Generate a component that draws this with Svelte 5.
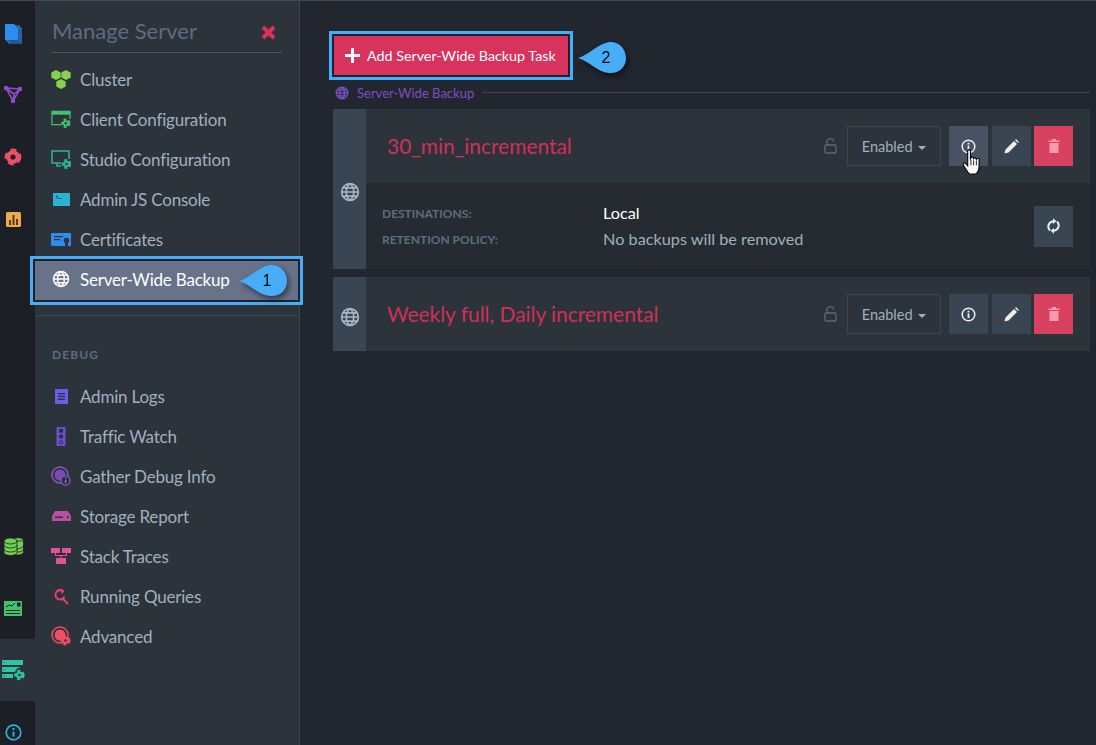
<script>
	const globeLines = 'M12 2a10 10 0 1 0 0 20a10 10 0 1 0 0-20M2 12h20M3.4 7h17.2M3.4 17h17.2M12 2c-6 5-6 15 0 20M12 2c6 5 6 15 0 20';
</script>

{#snippet globe(size, color, width = 2)}
	<svg width={size} height={size} viewBox="0 0 24 24" fill="none" stroke={color} stroke-width={width}><path d={globeLines} /></svg>
{/snippet}

{#snippet gear(cx, cy, r, color, hole)}
	<circle {cx} {cy} r={r} fill={color} />
	<circle {cx} {cy} r={r + 0.6} fill="none" stroke={color} stroke-width="2" stroke-dasharray={`${r * 0.9} ${r * 0.67}`} />
	<circle {cx} {cy} r={r * 0.38} fill={hole} />
{/snippet}

{#snippet callout(n)}
	<svg width="52" height="36" viewBox="0 0 52 36">
		<path d="M1 17C12 14 20 3 32 1C41 0 49 7 49 17C49 27 41 33 32 32C20 31 12 20 1 17Z" fill="#47adf8" />
	</svg>
	<span class="callout-num">{n}</span>
{/snippet}

<div class="page">
	<nav class="rail">
		<div class="rail-item">
			<svg width="18" height="21" viewBox="0 0 18 21">
				<path d="M5 5h12v15H5z" fill="none" stroke="#2f8df0" stroke-width="1.2" />
				<path d="M3 3h12v15H3z" fill="#1c2026" stroke="#2f8df0" stroke-width="1.2" />
				<path d="M1 2a1 1 0 0 1 1-1h8l4 4v11a1 1 0 0 1-1 1H2a1 1 0 0 1-1-1z" fill="#2f8df0" />
			</svg>
		</div>
		<div class="rail-item">
			<svg width="18" height="18" viewBox="0 0 18 18" fill="none" stroke="#8d4fc4" stroke-width="1.6">
				<path d="M2 2L16 3L9 15ZM2 2L10 8M16 3L10 8M9 15L10 8" />
				<circle cx="2" cy="2" r="1.5" fill="#8d4fc4" /><circle cx="16" cy="3" r="1.5" fill="#8d4fc4" /><circle cx="9" cy="15" r="1.5" fill="#8d4fc4" />
			</svg>
		</div>
		<div class="rail-item">
			<svg width="18" height="18" viewBox="0 0 18 18">
				{@render gear(9, 9, 6.8, '#f0506a', '#1c2026')}
			</svg>
		</div>
		<div class="rail-item">
			<svg width="15" height="15" viewBox="0 0 15 15">
				<rect width="15" height="15" rx="1.5" fill="#f0a94e" />
				<path d="M3 8h2v5H3zM6.5 3h2v10h-2zM10 7h2v6h-2z" fill="#5a3b22" />
			</svg>
		</div>
		<div class="rail-bottom">
			<div class="rail-item">
				<svg width="21" height="19" viewBox="0 0 21 19" fill="#73cf4f" stroke="#1c2026" stroke-width=".8">
					<ellipse cx="15" cy="3.5" rx="5.5" ry="2.8" /><path d="M9.5 4h11v11a5.5 3 0 0 1-11 0z" />
					<path d="M9.5 8.5a5.5 3 0 0 0 11 0M9.5 12a5.5 3 0 0 0 11 0" fill="none" />
					<path d="M1 4a6.5 3 0 0 1 13 0v11.5a6.500 3 0 0 1-13 0z" />
					<path d="M1 8a6.500 3 0 0 0 13 0M1 12a6.500 3 0 0 0 13 0M1 4a6.500 3 0 0 0 13 0" fill="none" />
				</svg>
			</div>
			<div class="rail-item">
				<svg width="18" height="15" viewBox="0 0 18 15">
					<rect width="18" height="15" fill="#3ec46d" />
					<path d="M2 6l3-2l3 1l3-3" fill="none" stroke="#1c2026" />
					<path d="M13 1.500h3.500v4H13zM2 9h14v1H2zM2 12h14v1H2z" fill="#1c2026" />
				</svg>
			</div>
			<div class="rail-item active">
				<svg width="24" height="21" viewBox="0 0 24 21">
					<rect x="1" y="0" width="21" height="5" fill="#2ec4a5" />
					<path d="M1 7h19q-5 1-6 5H1zM1 14h11v4H1z" fill="#2ec4a5" />
					<path d="M2.500 2h1v1h-1zM2.500 9h1v1h-1zM2.500 15.500h1v1h-1z" fill="#2c333b" />
					{@render gear(18.500, 15, 3.600, '#2ec4a5', '#2c333b')}
				</svg>
			</div>
			<div class="rail-item">
				<svg width="17" height="17" viewBox="0 0 17 17">
					<circle cx="8.500" cy="8.500" r="7.300" fill="none" stroke="#27b3dc" stroke-width="1.700" />
					<path d="M7.500 7.500h2v5h-2zM7.500 4h2v2h-2z" fill="#27b3dc" />
				</svg>
			</div>
		</div>
	</nav>

	<aside class="side">
		<header class="side-head">
			<h2>Manage Server</h2>
			<svg class="close" width="15" height="15" viewBox="0 0 15 15"><path d="M2 2L13 13M13 2L2 13" stroke="#dc3259" stroke-width="4" /></svg>
		</header>

		<ul class="menu">
			<li>
				<span class="ic"><svg width="20" height="19" viewBox="0 0 20 19" fill="#86d14e">
					<path d="M5 0l4.700 2.500v5L5 10L.3 7.500v-5zM15 0l4.700 2.500v5L15 10l-4.700-2.500v-5zM10 9l4.700 2.500v5L10 19l-4.700-2.500v-5z" />
				</svg></span>Cluster
			</li>
			<li>
				<span class="ic"><svg width="21" height="18" viewBox="0 0 21 18">
					<path d="M11 15H1V1h19v8" fill="none" stroke="#3ec46d" stroke-width="1.300" />
					<path d="M1 1h19v3.500H1z" fill="#3ec46d" />
					{@render gear(15.500, 13.500, 3.300, '#3ec46d', '#2c333b')}
				</svg></span>Client Configuration
			</li>
			<li>
				<span class="ic"><svg width="20" height="19" viewBox="0 0 20 19" fill="none">
					<path d="M10 13H1V1h17v8M6 13v3h4" stroke="#2db597" stroke-width="1.500" />
					{@render gear(15.500, 14, 3.300, '#2db597', '#2c333b')}
				</svg></span>Studio Configuration
			</li>
			<li>
				<span class="ic"><svg width="17" height="13" viewBox="0 0 17 13">
					<rect width="17" height="13" fill="#28b4d2" />
					<path d="M3 2.500l2 1.500l-2 1.500" fill="none" stroke="#16303d" stroke-width=".8" /><path d="M5.500 5.500h3" stroke="#16303d" stroke-width=".8" />
				</svg></span>Admin JS Console
			</li>
			<li>
				<span class="ic"><svg width="20" height="13" viewBox="0 0 20 13">
					<path d="M1 0h18a1 1 0 0 1 1 1v11a1 1 0 0 1-1 1H1a1 1 0 0 1-1-1V1a1 1 0 0 1 1-1z" fill="#2f8df0" />
					<path d="M3 3h9v1.300H3zM3 6h6v1.300H3z" fill="#2c333b" />
					<circle cx="15.500" cy="7.500" r="2.800" fill="#2c333b" /><path d="M14 9h3v4h-3z" fill="#2c333b" />
				</svg></span>Certificates
			</li>
			<li class="on">
				<span class="ic">{@render globe(18, '#fff', 2)}</span>Server-Wide Backup
			</li>
		</ul>

		<div class="side-sep"></div>
		<div class="side-label">DEBUG</div>

		<ul class="menu">
			<li>
				<span class="ic"><svg width="13" height="15" viewBox="0 0 13 15">
					<rect width="13" height="15" fill="#6a5ee6" />
					<path d="M3 4h7v1.300H3zM3 6.800h7v1.300H3zM3 9.600h7v1.300H3z" fill="#2c333b" />
				</svg></span>Admin Logs
			</li>
			<li>
				<span class="ic"><svg width="10" height="19" viewBox="0 0 10 19">
					<rect width="9" height="19" x=".5" rx=".8" fill="#6b50d8" />
					<circle cx="5" cy="3.700" r="2.200" fill="#2c333b" /><circle cx="5" cy="9.500" r="2.200" fill="#2c333b" /><circle cx="5" cy="15.300" r="1.800" fill="none" stroke="#2c333b" />
				</svg></span>Traffic Watch
			</li>
			<li>
				<span class="ic"><svg width="20" height="20" viewBox="0 0 20 20">
					<circle cx="9" cy="9" r="8" fill="#2c333b" stroke="#8d55c4" stroke-width="1.500" />
					<circle cx="9" cy="9" r="5.500" fill="#7a4bb0" />
					<circle cx="14.500" cy="14.500" r="4.600" fill="#2c333b" stroke="#8d55c4" stroke-width="1.200" />
					<path d="M14 14h1.200v3H14zM14 11.800h1.200v1.200H14z" fill="#a56fe0" />
				</svg></span>Gather Debug Info
			</li>
			<li>
				<span class="ic"><svg width="19" height="10" viewBox="0 0 19 10">
					<path d="M3 0h13l3 5v5H0V5z" fill="#b84fa3" />
					<path d="M3 5.500h8v1.500H3zM15 5.500h2v1.500h-2z" fill="#2c333b" />
				</svg></span>Storage Report
			</li>
			<li>
				<span class="ic"><svg width="20" height="17" viewBox="0 0 20 17" fill="#e2529c">
					<path d="M0 0h9v5H0zM11 0h9v5h-9zM5 10h10v6H5z" />
					<path d="M4.500 5v2.500h11V5M10 7.500V10" fill="none" stroke="#e2529c" />
				</svg></span>Stack Traces
			</li>
			<li>
				<span class="ic"><svg width="16" height="17" viewBox="0 0 16 17" fill="none" stroke="#ea3d72" stroke-width="2">
					<path d="M10.500 3.500a4.700 4.700 0 1 0 1 5M5 3a4.700 4.700 0 0 1 5.500 .5" />
					<path d="M8 1l2.500 2.500l-2 2" stroke-width="1.300" /><path d="M9.500 10.500l5.500 5.500" />
				</svg></span>Running Queries
			</li>
			<li>
				<span class="ic"><svg width="20" height="20" viewBox="0 0 20 20">
					<circle cx="9" cy="9" r="8" fill="#2c333b" stroke="#ee4f63" stroke-width="1.500" />
					<circle cx="9" cy="9" r="5.500" fill="#ee4f63" />
					{@render gear(14.500, 14.500, 3.400, '#ee4f63', '#2c333b')}
				</svg></span>Advanced
			</li>
		</ul>
	</aside>

	<main class="content">
		<div class="add-wrap">
			<button class="add">
				<svg width="15" height="15" viewBox="0 0 15 15"><path d="M6 0h3v6h6v3H9v6H6V9H0V6h6z" fill="#fff" /></svg>
				Add Server-Wide Backup Task
			</button>
		</div>

		<div class="group-head">
			{@render globe(14, '#7d4fc4', 2.200)}
			<span>Server-Wide Backup</span>
			<i></i>
		</div>

		<section class="card">
			<div class="strip">{@render globe(20, '#a6b5c4', 2)}</div>
			<div class="card-body">
				<div class="card-top">
					<h3>30_min_incremental</h3>
					{@render taskActions(true)}
				</div>
				<div class="card-details">
					<dl>
						<dt>DESTINATIONS:</dt><dd class="white">Local</dd>
						<dt>RETENTION POLICY:</dt><dd>No backups will be removed</dd>
					</dl>
					<button class="sq refresh">
						<svg width="13" height="16" viewBox="0 0 13 16" fill="none" stroke="#e8eef2" stroke-width="2">
							<path d="M3 12.500C0 9.500 1 4 6.500 3.200M10 3.500C13 6.500 12 12 6.500 12.800" />
							<path d="M6 .3L9.500 3.200L6 6zM7 10L3.500 12.800L7 15.700z" fill="#e8eef2" stroke="none" />
						</svg>
					</button>
				</div>
			</div>
		</section>

		<section class="card">
			<div class="strip">{@render globe(20, '#a6b5c4', 2)}</div>
			<div class="card-body">
				<div class="card-top">
					<h3>Weekly full, Daily incremental</h3>
					{@render taskActions(false)}
				</div>
			</div>
		</section>
	</main>

	<!-- annotations drawn over the screenshot -->
	<div class="mark mark-side"></div>
	<div class="mark mark-add"></div>
	<div class="callout c1">{@render callout(1)}</div>
	<div class="callout c2">{@render callout(2)}</div>
	<svg class="hand" width="19" height="26" viewBox="0 0 17 24">
		<path d="M5 1.500a1.300 1.300 0 0 1 2.500 0V9l.5-.8a1.200 1.200 0 0 1 2.300 .3l.2 .4a1.200 1.200 0 0 1 2.300 .3l.2 .4a1.200 1.200 0 0 1 2.500 .4V16c0 3-1.500 6-3 7H6.500c-1.500-1.500-5-7-5.500-8.500c-.4-1.300 1.200-2.200 2-1.200L5 15.500z" fill="#fff" stroke="#000" stroke-width="1" />
		<path d="M8 10v5M10.500 10.500v4.500M13 11v4" stroke="#000" stroke-width=".8" />
	</svg>
</div>

{#snippet taskActions(hover)}
	<div class="actions">
		<svg class="lock" width="13" height="16" viewBox="0 0 13 16" fill="none" stroke="#5c6878" stroke-width="1.300">
			<rect x="1" y="7" width="11" height="8" rx="1" /><path d="M3 7V4a3.300 3.300 0 0 1 6.600 0" />
		</svg>
		<button class="state">Enabled <b></b></button>
		<button class="sq" class:hover>
			<svg width="15" height="15" viewBox="0 0 15 15">
				<circle cx="7.500" cy="7.500" r="6.300" fill="none" stroke="#e8eef2" stroke-width="1.500" />
				<path d="M6.600 6.500h1.800v4.500H6.600zM6.600 3.800h1.800v1.700H6.600z" fill="#e8eef2" />
			</svg>
		</button>
		<button class="sq">
			<svg width="15" height="15" viewBox="0 0 15 15">
				<path d="M0.500 14.500l1-4L10 2l3 3L4.500 13.500zM11 1l1-1l3 3l-1 1z" fill="#f2eee2" />
			</svg>
		</button>
		<button class="sq del">
			<svg width="12" height="14" viewBox="0 0 12 14" fill="#f99bb0">
				<path d="M1.500 4h9v10h-9zM0.500 1.500h11v1.500h-11zM4 0h4v1.500H4z" />
			</svg>
		</button>
	</div>
{/snippet}

<style>
	:global(body) {
		background: #22262f;
	}
	.page {
		position: relative;
		display: flex;
		width: 1096px;
		height: 745px;
		overflow: hidden;
		background: #22262f;
		border-top: 1px solid #3f4753;
		box-sizing: border-box;
		font-family: Lato, "Open Sans", sans-serif;
		color: #a6b5c4;
	}
	.rail {
		flex: 0 0 35px;
		padding-top: 1px;
		background: #1c2026;
	}
	.rail-item {
		height: 62px;
		padding-right: 9px;
		box-sizing: border-box;
		display: flex;
		align-items: center;
		justify-content: center;
	}
	.rail-item.active {
		background: #2c333b;
	}
	.rail-bottom {
		margin-top: 265px;
	}
	.side {
		flex: 0 0 264px;
		background: #2c333b;
		border-right: 1px solid #3c4552;
		box-sizing: content-box;
	}
	.side-head {
		display: flex;
		align-items: center;
		justify-content: space-between;
		height: 52px;
		margin: 0 17px 0 16px;
		padding: 10px 6px 0 0;
		border-bottom: 1px solid #4a5563;
		box-sizing: border-box;
	}
	.side-head h2 {
		margin: 0 0 2px 1px;
		font-size: 22px;
		font-weight: 400;
		color: #5e6b80;
	}
	.close {
		margin-top: 2px;
	}
	.menu {
		list-style: none;
		margin: 0;
		padding: 0;
	}
	.side-head + .menu {
		margin-top: 7px;
	}
	.menu li {
		display: flex;
		align-items: center;
		height: 40px;
		padding: 0 0 2px 16px;
		box-sizing: border-box;
		font-size: 17px;
		letter-spacing: -0.2px;
		color: #a1afbf;
	}
	.menu li.on {
		background: #68738a;
		color: #fff;
	}
	.ic {
		flex: 0 0 29px;
		display: flex;
		align-items: center;
		justify-content: center;
		width: 20px;
		padding-right: 9px;
		box-sizing: border-box;
	}
	.side-sep {
		height: 1px;
		margin-top: 15px;
		background: #3c4552;
	}
	.side-label {
		padding: 31px 0 0 17px;
		height: 61px;
		box-sizing: border-box;
		font-size: 12px;
		line-height: 15px;
		font-weight: 700;
		letter-spacing: 1.1px;
		color: #5e6b80;
	}
	.content {
		flex: 1;
		padding: 34px 6px 0 33px;
		min-width: 0;
	}
	.add-wrap {
		height: 41px;
	}
	.add {
		display: inline-flex;
		align-items: center;
		gap: 7px;
		width: 238px;
		height: 41px;
		padding: 0 0 0 12px;
		border: 0;
		background: #d8335c;
		color: #fff;
		font: 400 14.300px Lato, sans-serif;
	}
	.group-head {
		display: flex;
		align-items: center;
		height: 33px;
		font-size: 13px;
		color: #7d4fc4;
		padding-left: 2px;
		gap: 8px;
	}
	.group-head i {
		flex: 1;
		height: 1px;
		background: #3c4552;
	}
	.card {
		display: flex;
		margin-bottom: 8px;
		background: #262b32;
	}
	.strip {
		flex: 0 0 33px;
		display: flex;
		align-items: center;
		justify-content: center;
		padding-top: 5px;
		background: #3a4553;
	}
	.card-body {
		flex: 1;
	}
	.card-top {
		display: flex;
		align-items: center;
		justify-content: space-between;
		height: 74px;
		padding: 0 17px 0 21px;
		background: #2c333b;
	}
	.card-top h3 {
		margin: 0 0 2px;
		font-size: 21px;
		font-weight: 400;
		letter-spacing: -0.05px;
		color: #d22f56;
	}
	.actions {
		display: flex;
		align-items: center;
		gap: 4px;
	}
	.lock {
		margin-right: 6px;
	}
	.state {
		width: 94px;
		height: 40px;
		margin-right: 4px;
		padding: 0;
		background: transparent;
		border: 1px solid #3c4552;
		color: #a1afbf;
		font: 400 14.500px Lato, sans-serif;
	}
	.state b {
		display: inline-block;
		margin-left: 2px;
		vertical-align: 2px;
		border: 4px solid transparent;
		border-top-color: #a1afbf;
		border-bottom: 0;
	}
	.sq {
		display: flex;
		align-items: center;
		justify-content: center;
		width: 39px;
		height: 40px;
		padding: 0;
		border: 0;
		background: #3a4553;
	}
	.sq.hover {
		background: #475262;
	}
	.sq.del {
		margin-left: -1px;
		background: #d8405f;
	}
	.card-details {
		display: flex;
		align-items: center;
		justify-content: space-between;
		height: 86px;
		padding: 0 17px 0 16px;
	}
	.card-details dl {
		display: grid;
		grid-template-columns: 221px auto;
		align-items: center;
		row-gap: 4px;
		margin: 0;
	}
	.card-details dt {
		padding-top: 1px;
		font-size: 12px;
		font-weight: 700;
		color: #5e6b80;
	}
	.card-details dd {
		margin: 0;
		font-size: 16.250px;
		line-height: 22px;
		color: #a1afbf;
	}
	.card-details dd.white {
		color: #fff;
	}
	.refresh {
		height: 41px;
	}
	.mark {
		position: absolute;
		border: 3px solid #47adf8;
		box-sizing: border-box;
		box-shadow: inset 0 0 0 2px #1f2329;
	}
	.mark-side {
		left: 30px;
		top: 255px;
		width: 273px;
		height: 49px;
	}
	.mark-add {
		left: 329px;
		top: 30px;
		width: 244px;
		height: 49px;
	}
	.callout {
		position: absolute;
		width: 52px;
		height: 36px;
		filter: drop-shadow(2px 3px 3px rgba(0, 0, 0, 0.55));
	}
	.callout svg {
		display: block;
	}
	.callout-num {
		position: absolute;
		left: 19px;
		top: 0;
		width: 20px;
		text-align: center;
		font: 16px/34px "Liberation Sans", sans-serif;
		color: #000;
	}
	.c1 {
		left: 238px;
		top: 263px;
	}
	.c2 {
		left: 577px;
		top: 40px;
	}
	.hand {
		position: absolute;
		left: 962px;
		top: 148px;
	}
</style>
